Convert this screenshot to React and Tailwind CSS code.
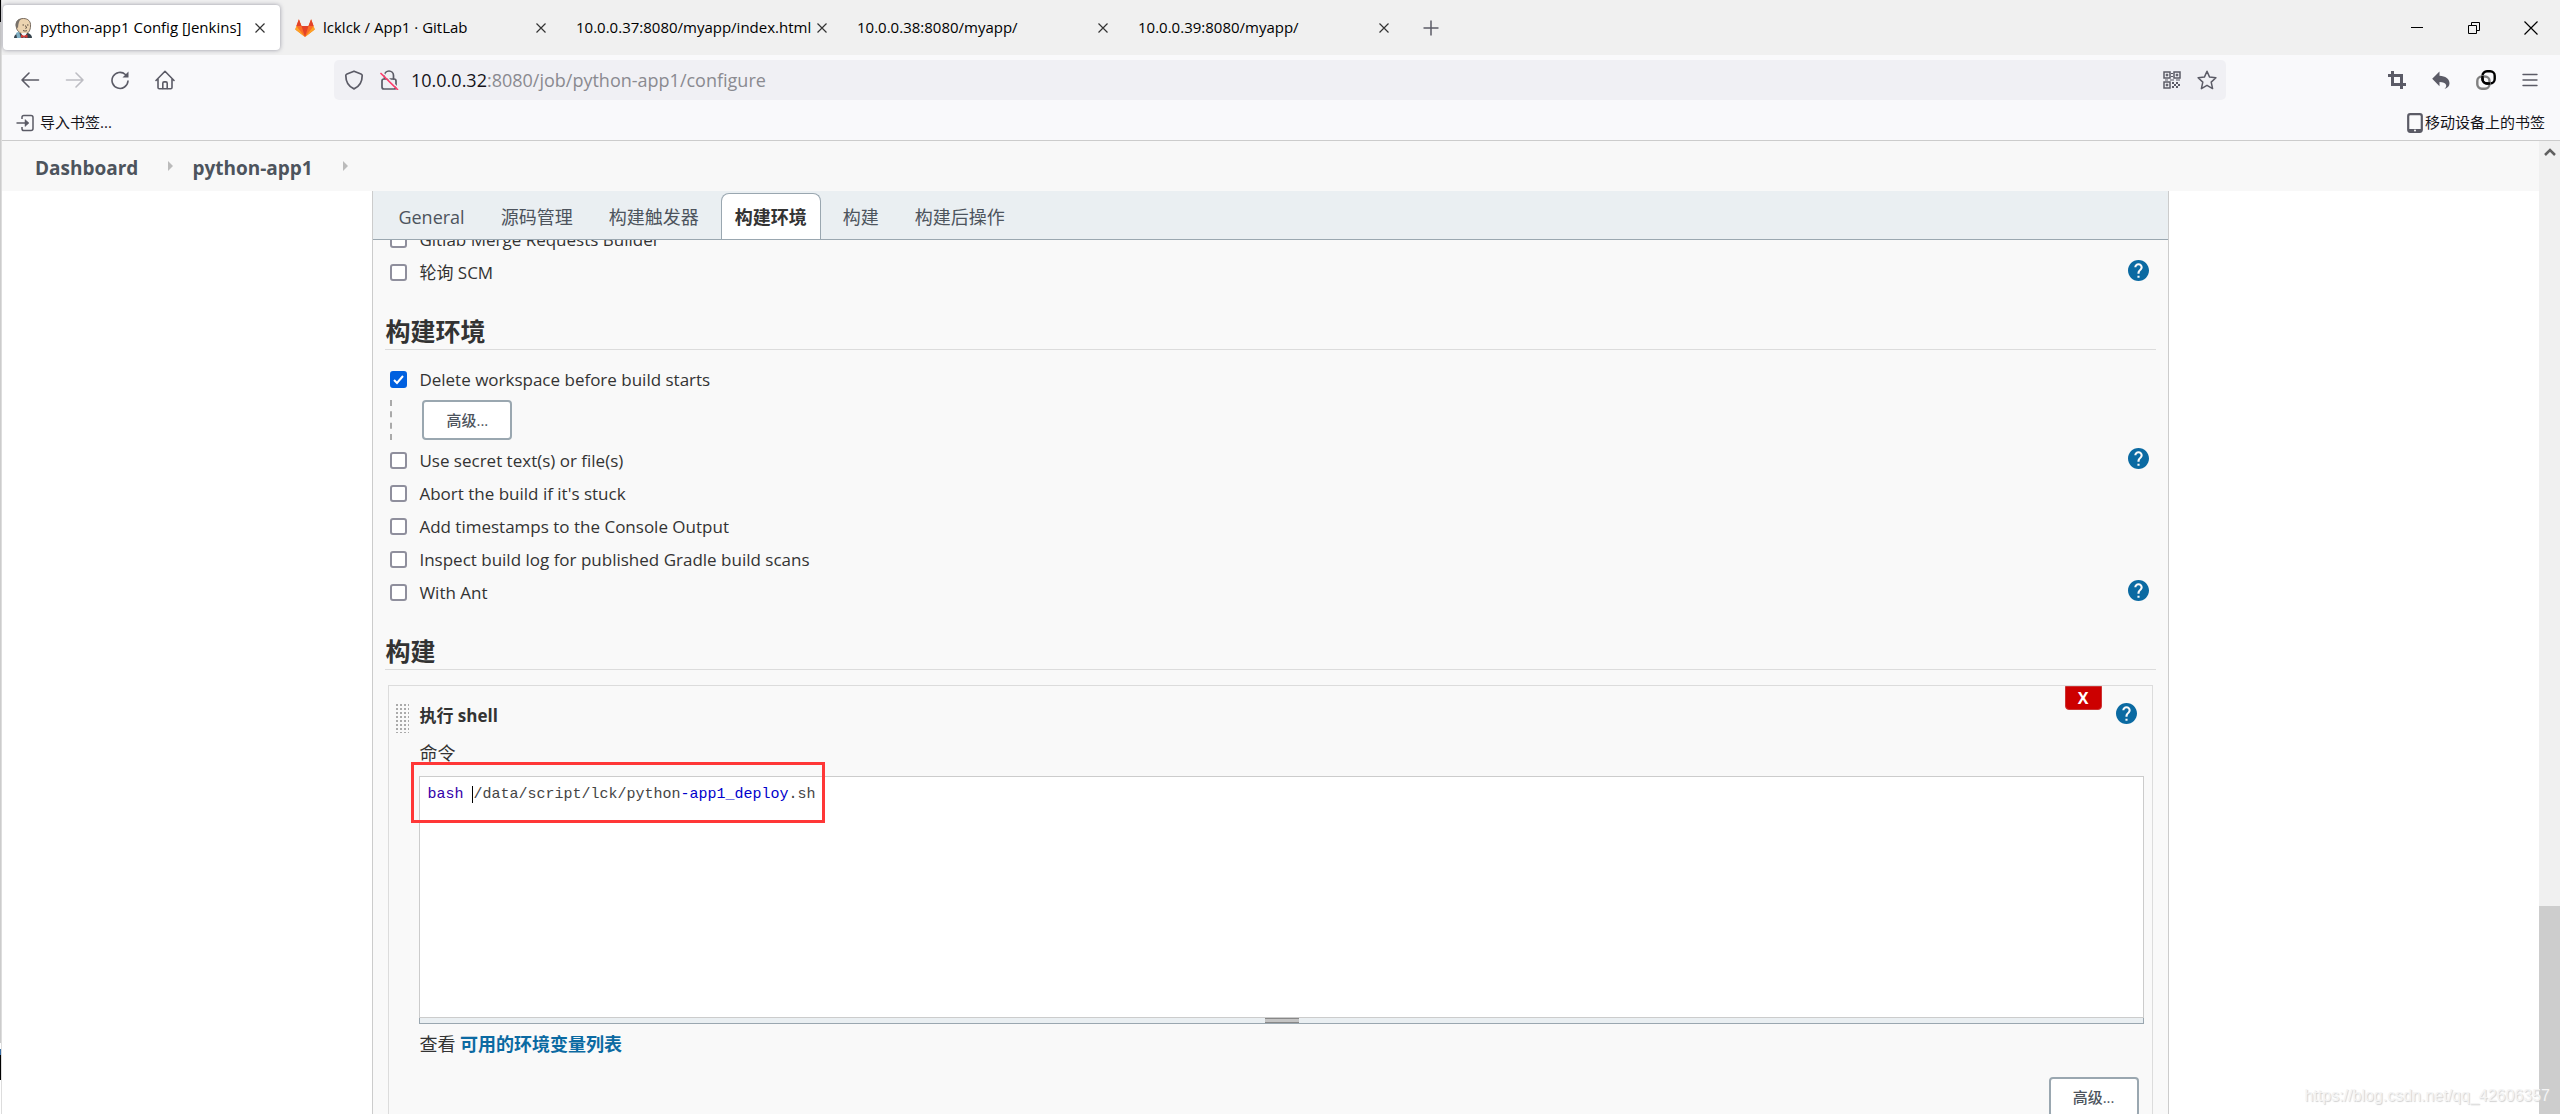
import { useState } from "react";

const browserTabs = [
    { title: "python-app1 Config [Jenkins]", icon: "jenkins", active: true },
    { title: "lcklck / App1 · GitLab", icon: "gitlab" },
    { title: "10.0.0.37:8080/myapp/index.html" },
    { title: "10.0.0.38:8080/myapp/" },
    { title: "10.0.0.39:8080/myapp/" },
];

const configTabs = ["General", "源码管理", "构建触发器", "构建环境", "构建", "构建后操作"];

const environmentOptions = [
    { id: "secret", label: "Use secret text(s) or file(s)", help: true },
    { id: "abort", label: "Abort the build if it's stuck" },
    { id: "timestamps", label: "Add timestamps to the Console Output" },
    { id: "gradle", label: "Inspect build log for published Gradle build scans" },
    { id: "ant", label: "With Ant", help: true },
];

/* ---------- Icons ---------- */

const JenkinsIcon = () => (
    <svg className="h-5 w-[18px] shrink-0" viewBox="0 0 18 20">
        <path d="M0 20c0-3 2-4 5-5h9c2 1 4 2 4 5z" fill="#35434d" />
        <path d="M2 7C2 3 5 0.5 9.500 0.5S17 3.500 16.500 8c0 4-2 8-6 8S3 13 2.500 10z" fill="#ecd3b0" stroke="#5b4c40" strokeWidth="0.8" />
        <path d="M2 9C1 4 4 0.500 8 0.800 5 2 4.500 5 4 10z" fill="#77716b" />
        <path d="M8.500 7h1.500M13 7h1.500M11.500 7.500l1 2.500-1 .5M9 12.500c1.500.8 3 .6 4 0" fill="none" stroke="#5b4c40" strokeWidth="1" />
        <path d="M7 15l3 5 3-5z" fill="#f4f4f4" />
        <path d="M7 16.500l3 1.200 3.500-1.200v3.500L10 19l-3 1z" fill="#d33833" />
        <path d="M2 15l3-1.500 2 6.500H3z" fill="#81b0c4" />
    </svg>
);

const GitlabIcon = () => (
    <svg className="h-5 w-5 shrink-0" viewBox="0 0 20 20">
        <path d="M10 19L0.300 11.500 3.900 1.200 6.500 8h7l2.600-6.800 3.600 10.300z" fill="#fc6d26" />
        <path d="M3.900 1.200L1.300 8h5.200zM16.100 1.200L18.700 8h-5.200zM10 19L6.500 8h7z" fill="#e24329" />
        <path d="M1.300 8l-1 3.500L10 19zM18.700 8l1 3.500L10 19z" fill="#fca326" />
    </svg>
);

const CloseIcon = () => (
    <svg className="h-2.5 w-2.5" viewBox="0 0 10 10" fill="none" stroke="#333333" strokeWidth="1.2">
        <path d="M0.500 0.500l9 9M9.500 0.500l-9 9" />
    </svg>
);

const ArrowIcon = ({ flip }) => (
    <svg className={flip ? "h-5 w-5 rotate-180" : "h-5 w-5"} viewBox="0 0 20 20" fill="none" stroke={flip ? "#bdbdc3" : "#5b5b66"} strokeWidth="1.6" strokeLinecap="round" strokeLinejoin="round">
        <path d="M18.500 10H2M9 3l-7 7 7 7" />
    </svg>
);

const ReloadIcon = () => (
    <svg className="h-5 w-5" viewBox="0 0 20 20" fill="none" stroke="#5b5b66" strokeWidth="1.6" strokeLinecap="round">
        <path d="M18 11a8 8 0 1 1-2.600-6.500" />
        <path d="M18.500 1.500v6h-6z" fill="#5b5b66" stroke="none" />
    </svg>
);

const HomeIcon = () => (
    <svg className="h-5 w-5" viewBox="0 0 20 20" fill="none" stroke="#5b5b66" strokeWidth="1.6" strokeLinejoin="round" strokeLinecap="round">
        <path d="M1 10.500L10 1.300l9 9.200M3 9v8.500c0 .8.500 1.300 1.300 1.300h11.400c.8 0 1.300-.5 1.300-1.300V9" />
        <path d="M7.800 18.500v-5.200c0-.9.500-1.400 1.300-1.400h1.800c.8 0 1.300.5 1.300 1.400v5.200" />
    </svg>
);

const ShieldIcon = () => (
    <svg className="h-5 w-5" viewBox="0 0 20 20" fill="none" stroke="#5b5b66" strokeWidth="1.7" strokeLinejoin="round">
        <path d="M10 1.200l7 2.800c.8.300 1.200.8 1.200 1.600 0 6-3 11.200-8.200 13.300C4.800 16.800 1.800 11.600 1.800 5.600 1.800 4.800 2.200 4.300 3 4z" />
    </svg>
);

const InsecureLockIcon = () => (
    <svg className="h-5 w-5" viewBox="0 0 20 20" fill="none" strokeLinecap="round">
        <rect x="3" y="9" width="14" height="10" rx="2" stroke="#5b5b66" strokeWidth="1.700" />
        <path d="M5.500 8.500V5.500a4.500 4.500 0 0 1 9 0v3.500" stroke="#5b5b66" strokeWidth="1.700" />
        <path d="M3.500 2.500l16 16" stroke="#f0f0f4" strokeWidth="1.500" />
        <path d="M2 3.500l16.500 16" stroke="#ff3b6b" strokeWidth="1.700" />
    </svg>
);

const QrIcon = () => (
    <svg className="h-[18px] w-[18px]" viewBox="0 0 18 18" fill="none" stroke="#5b5b66" strokeWidth="1.500">
        <path d="M1 1h6v6H1zM11 1h6v6h-6zM1 11h6v6H1z" />
        <path d="M3.200 3.200h1.600v1.600H3.200zM13.200 3.200h1.600v1.600h-1.600zM3.200 13.200h1.600v1.600H3.200zM8 2.500h2M8 5.500h2M2 9h3M7 9h4M13 9h4" fill="#5b5b66" strokeWidth="1" />
        <path d="M9 11h2v2H9zM13 11h2v2h-2zM11 13h2v2h-2zM15 13h2v2h-2zM9 15h2v2H9zM13 15h2v2h-2z" fill="#5b5b66" stroke="none" />
    </svg>
);

const StarIcon = () => (
    <svg className="h-5 w-5" viewBox="0 0 20 20" fill="none" stroke="#5b5b66" strokeWidth="1.500" strokeLinejoin="round">
        <path d="M10 1.200l2.600 5.900 6.300.7-4.700 4.300 1.400 6.500L10 15.300l-5.600 3.300 1.400-6.500L1.100 7.800l6.300-.7z" />
    </svg>
);

const CropIcon = () => (
    <svg className="h-[18px] w-[18px]" viewBox="0 0 18 18" fill="none" stroke="#5b5b66" strokeWidth="3">
        <path d="M4.500 0v13.500H18M0 4.500h13.500V18" />
    </svg>
);

const UndoIcon = () => (
    <svg className="h-[18px] w-[18px]" viewBox="0 0 18 18">
        <path d="M7.500 0.500v4.300C13.500 5 17.500 8 17.500 12.300c0 2.700-1.800 4.700-5 5.700 1.800-1.500 2-3 1.500-4.200-.8-2-3-2.700-6.500-2.800v4.300L0.200 7.800z" fill="#5b5b66" />
    </svg>
);

const LinkRingsIcon = () => (
    <svg className="h-5 w-5" viewBox="0 0 20 20" fill="none" strokeWidth="2.400">
        <rect x="6.500" y="1.300" width="12.200" height="12.200" rx="4.500" stroke="#000000" />
        <rect x="1.300" y="6.500" width="12.200" height="12.200" rx="4.500" stroke="#808080" />
        <path d="M6.500 6v3a4.500 4.500 0 0 0 4.500 4.500h3" stroke="#000000" />
    </svg>
);

const MenuIcon = () => (
    <svg className="h-4 w-4" viewBox="0 0 16 16" stroke="#5b5b66" strokeWidth="1.400" strokeLinecap="round">
        <path d="M1 2.500h14M1 8h14M1 13.500h14" />
    </svg>
);

const ImportIcon = () => (
    <svg className="h-[18px] w-[18px] shrink-0" viewBox="0 0 18 18" fill="none" stroke="#5b5b66" strokeWidth="1.500" strokeLinejoin="round">
        <path d="M6 5V3.300C6 2 6.800 1.500 7.800 1.500H15c1.300 0 2 .7 2 2v11c0 1.300-.7 2-2 2H7.800C6.800 16.500 6 16 6 14.700V13" />
        <path d="M0.500 9H12" />
        <path d="M9 5.500L13 9l-4 3.500z" fill="#5b5b66" strokeWidth="0.500" />
    </svg>
);

const PhoneIcon = () => (
    <svg className="h-5 w-4 shrink-0" viewBox="0 0 16 20">
        <rect x="1.200" y="1.200" width="13.600" height="17.600" rx="2" fill="none" stroke="#5b5b66" strokeWidth="2.200" />
        <path d="M1 16h14v3H1z" fill="#5b5b66" />
        <circle cx="8" cy="17.500" r="1" fill="#ffffff" />
    </svg>
);

const CrumbArrow = () => (
    <svg className="h-2.5 w-[5px] shrink-0" viewBox="0 0 5 10">
        <path d="M0 0l5 5-5 5z" fill="#bbbbbb" />
    </svg>
);

/* ---------- Small parts ---------- */

const HelpLink = ({ className }) => (
    <a href="#help" aria-label="Help" className={className}>
        <svg className="h-[21px] w-[21px]" viewBox="2 2 20 20">
            <path
                fill="#0b6aa2"
                d="M12 2C6.480 2 2 6.480 2 12s4.480 10 10 10 10-4.480 10-10S17.520 2 12 2zm1 17h-2v-2h2v2zm2.070-7.750l-.9.920C13.450 12.900 13 13.500 13 15h-2v-.5c0-1.100.450-2.100 1.170-2.830l1.240-1.260c.370-.360.590-.860.590-1.410 0-1.100-.900-2-2-2s-2 .900-2 2H8c0-2.210 1.790-4 4-4s4 1.790 4 4c0 .880-.360 1.680-.930 2.250z"
            />
        </svg>
    </a>
);

const CheckRow = ({ id, label, help, defaultChecked }) => (
    <div className="flex h-[33px] items-start justify-between pl-[5px] pr-[7px]">
        <div className="flex h-full items-center gap-3">
            <input
                type="checkbox"
                id={id}
                defaultChecked={defaultChecked}
                className="h-[17px] w-[17px] appearance-none rounded-[3px] border-2 border-[#8f8f9d] bg-white checked:border-[#0060df] checked:bg-[#0060df] checked:bg-[url('data:image/svg+xml,%3Csvg%20xmlns=%22http://www.w3.org/2000/svg%22%20viewBox=%220%200%2013%2013%22%3E%3Cpath%20d=%22M2%207l3%203%206-7%22%20fill=%22none%22%20stroke=%22white%22%20stroke-width=%222%22/%3E%3C/svg%3E')]"
            />
            <label htmlFor={id}>{label}</label>
        </div>
        {help && <HelpLink className="mt-1" />}
    </div>
);

const SectionTitle = ({ children }) => (
    <h2 className="border-b border-[#dcdcdc] pt-[26px] pb-0.5 text-[25px] leading-8 font-bold">{children}</h2>
);

const AdvancedButton = () => (
    <button type="button" className="h-10 w-[90px] rounded border-2 border-[#9aa7b0] bg-white text-[15px] font-medium text-[#4d545d]">
        高级...
    </button>
);

/* ---------- Browser chrome ---------- */

const BrowserTabs = () => (
    <div className="flex h-[55px] shrink-0 items-center justify-between bg-[#f0f0f0] text-black">
        <div className="flex items-center">
            {browserTabs.map((tab) => (
                <div
                    key={tab.title}
                    className={
                        tab.active
                            ? "ml-px mr-1 flex h-[45px] w-[277px] items-center gap-2 rounded bg-white pl-[11px] pr-[15px] shadow-[0_0_4px_rgba(90,90,110,0.6)]"
                            : "mr-1 flex h-[45px] w-[277px] items-center gap-2 pl-[11px] pr-[15px]"
                    }
                >
                    {tab.icon === "jenkins" && <JenkinsIcon />}
                    {tab.icon === "gitlab" && <GitlabIcon />}
                    <span className="flex-1 text-[15px] whitespace-nowrap">{tab.title}</span>
                    <button type="button" aria-label="Close tab" className="-ml-2 shrink-0">
                        <CloseIcon />
                    </button>
                </div>
            ))}
            <button type="button" aria-label="New tab" className="ml-[15px]">
                <svg className="h-4 w-4" viewBox="0 0 16 16" stroke="#5b5b66" strokeWidth="1.500">
                    <path d="M8 0.500v15M0.500 8h15" />
                </svg>
            </button>
        </div>
        <div className="flex items-center gap-[43px] pr-[22px]">
            <button type="button" aria-label="Minimize">
                <svg className="h-3.5 w-3.5" viewBox="0 0 14 14" stroke="#000000">
                    <path d="M1 6.500h12" />
                </svg>
            </button>
            <button type="button" aria-label="Restore">
                <svg className="h-3.5 w-3.5" viewBox="0 0 14 14" fill="none" stroke="#000000">
                    <path d="M1.500 4.500h8v8h-8zM4.500 4.500v-3h8v8h-3" />
                </svg>
            </button>
            <button type="button" aria-label="Close">
                <svg className="h-3.5 w-3.5" viewBox="0 0 14 14" stroke="#000000" strokeWidth="1.200">
                    <path d="M0.500 0.500l13 13M13.500 0.500l-13 13" />
                </svg>
            </button>
        </div>
    </div>
);

const Toolbar = () => (
    <div className="flex h-[50px] shrink-0 items-center bg-[#f9f9fb]">
        <div className="flex w-[332px] shrink-0 items-center gap-[25px] pl-[18px]">
            <button type="button" aria-label="Back"><ArrowIcon /></button>
            <button type="button" aria-label="Forward"><ArrowIcon flip /></button>
            <button type="button" aria-label="Reload"><ReloadIcon /></button>
            <button type="button" aria-label="Home"><HomeIcon /></button>
        </div>
        <div className="flex h-10 flex-1 items-center rounded-[5px] bg-[#f0f0f4] pl-2.5 pr-[9px]">
            <ShieldIcon />
            <span className="ml-[15px]"><InsecureLockIcon /></span>
            <p className="ml-3 flex-1 text-[18px] text-[#8a8a90]">
                <span className="text-[#15141a]">10.0.0.32</span>:8080/job/python-app1/configure
            </p>
            <div className="flex items-center gap-4">
                <button type="button" aria-label="QR code"><QrIcon /></button>
                <button type="button" aria-label="Bookmark"><StarIcon /></button>
            </div>
        </div>
        <div className="flex w-[334px] shrink-0 items-center justify-end gap-[26px] pr-[22px]">
            <button type="button" aria-label="Screenshot"><CropIcon /></button>
            <button type="button" aria-label="Undo"><UndoIcon /></button>
            <button type="button" aria-label="Container"><LinkRingsIcon /></button>
            <button type="button" aria-label="Menu"><MenuIcon /></button>
        </div>
    </div>
);

const BookmarksBar = () => (
    <div className="flex h-9 shrink-0 items-center justify-between border-b border-[#cccccc] bg-[#f9f9fb] pl-[14px] pr-[15px] text-[15px] text-[#15141a]">
        <button type="button" className="flex items-center gap-1.5">
            <ImportIcon />
            导入书签...
        </button>
        <button type="button" className="flex items-center gap-0.5">
            <PhoneIcon />
            移动设备上的书签
        </button>
    </div>
);

/* ---------- Jenkins page ---------- */

const Breadcrumbs = () => (
    <nav className="flex h-[50px] shrink-0 items-center bg-[#f8f8f8] pl-[33px] pt-1 text-[19px] font-bold text-[#4d545d]">
        <a href="#dashboard">Dashboard</a>
        <span className="ml-[30px] mr-[19px] pb-1"><CrumbArrow /></span>
        <a href="#python-app1">python-app1</a>
        <span className="ml-[30px] pb-1"><CrumbArrow /></span>
    </nav>
);

const ConfigTabs = ({ active, onSelect }) => (
    <div className="relative z-10 flex h-[49px] items-end gap-2 border-b border-[#9aa7b0] bg-[#eaeff2] pl-[11px]">
        {configTabs.map((tab) => (
            <button
                key={tab}
                type="button"
                onClick={() => onSelect(tab)}
                className={
                    tab === active
                        ? "h-[46px] rounded-t-lg border border-b-0 border-[#9aa7b0] bg-white px-[13px] pt-0.5 text-[18px] font-bold text-[#333333]"
                        : "h-[46px] px-3.5 pt-0.5 text-[18px] text-[#4d545d]"
                }
            >
                {tab}
            </button>
        ))}
    </div>
);

const DragHandle = () => (
    <div className="mt-[17px] h-[30px] w-3.5 shrink-0 cursor-move bg-[radial-gradient(circle,#aaaaaa_1px,transparent_1px)] bg-size-[4px_4px]" />
);

const ShellEditor = () => (
    <div className="relative">
        <div
            role="textbox"
            aria-labelledby="command-label"
            contentEditable
            suppressContentEditableWarning
            spellCheck={false}
            className="h-[242px] border border-[#cccccc] bg-white px-[7px] pt-2 font-['Liberation_Mono','Noto_Sans_CJK_SC',monospace] text-[15px] leading-5 whitespace-pre text-[#444444] outline-none"
        >
            <span className="text-[#3300aa]">bash</span>
            <span className="border-r border-black"> </span>
            /data/script/lck/python
            <span className="text-[#0000cc]">-app1_deploy</span>
            .sh
        </div>
        <div className="flex h-1.5 cursor-row-resize justify-center border border-t-0 border-[#9aa7b0] bg-[#eaeff2]">
            <div className="h-full w-[34px] border-y border-[#888888] bg-[#c4c4c4]" />
        </div>
        {/* Highlight around the deploy command */}
        <div className="pointer-events-none absolute -top-3.5 -left-2 h-[61px] w-[414px] border-3 border-[#ff3737]" />
    </div>
);

const ShellStep = () => (
    <section className="mx-[3px] mt-[15px] flex flex-1 border border-b-0 border-[#dcdcdc] pl-1.5 pr-2">
        <DragHandle />
        <div className="ml-2.5 flex-1">
            <div className="flex h-[55px] items-start">
                <h3 className="flex-1 pt-[18px] text-[17px] leading-6 font-bold">执行 shell</h3>
                <button
                    type="button"
                    className="h-6 w-[37px] rounded-b border border-[#cc3333] bg-[#cc0000] text-[16px] leading-5 font-bold text-white"
                >
                    X
                </button>
                <HelpLink className="ml-3.5 mr-[7px] mt-[17px]" />
            </div>
            <p id="command-label" className="mb-[11px] text-[18px] leading-6">命令</p>
            <ShellEditor />
            <p className="mt-2 text-[18px] leading-6">
                查看 <a href="#env-vars" className="font-bold text-[#0b6aa2]">可用的环境变量列表</a>
            </p>
            <div className="mt-[21px] mr-[5px] flex justify-end">
                <AdvancedButton />
            </div>
        </div>
    </section>
);

const ConfigForm = () => {
    const [active, setActive] = useState("构建环境");

    return (
        <main className="mx-auto flex min-h-0 w-[70.8%] flex-1 flex-col border-x border-[#cccccc] bg-[#f9f9f9] text-[17px] text-[#333333]">
            <ConfigTabs active={active} onSelect={setActive} />
            <form className="flex min-h-0 flex-1 flex-col overflow-hidden px-3">
                {/* Form is scrolled, so the first row sits half under the tabs */}
                <div className="-mt-[17px]">
                    <CheckRow id="gitlab-merge" label="Gitlab Merge Requests Builder" />
                    <CheckRow id="poll-scm" label="轮询 SCM" help />
                </div>

                <SectionTitle>构建环境</SectionTitle>
                <div className="mt-[13px]">
                    <CheckRow id="delete-workspace" label="Delete workspace before build starts" defaultChecked />
                    <div className="mt-1 mb-1 ml-[5px] border-l-2 border-dashed border-[#aaaaaa] pl-[30px]">
                        <AdvancedButton />
                    </div>
                    {environmentOptions.map((option) => (
                        <CheckRow key={option.id} {...option} />
                    ))}
                </div>

                <SectionTitle>构建</SectionTitle>
                <ShellStep />
            </form>
        </main>
    );
};

const Scrollbar = () => (
    <div className="flex w-[21px] shrink-0 flex-col items-center bg-[#f0f0f0]">
        <svg className="mt-1.5 h-2.5 w-3 shrink-0" viewBox="0 0 12 10" fill="none" stroke="#606060" strokeWidth="2.500">
            <path d="M1 8l5-5 5 5" />
        </svg>
        <div className="mt-auto h-[21.4%] w-full bg-[#cdcdcd]" />
    </div>
);

// Sliver of the window that lies behind the browser
const WindowEdge = () => (
    <div className="flex w-0.5 shrink-0 flex-col border-r border-[#dddddd]">
        <div className="h-[2%] bg-black" />
        <div className="flex-1 bg-[#cccccc]" />
        <div className="h-1.5 bg-white" />
        <div className="h-1.5 bg-[#3a6ea5]" />
        <div className="mb-[34px] h-[25px] bg-black" />
    </div>
);

const App = () => {
    return (
        <div className="relative flex h-screen w-full overflow-hidden bg-white font-['Open_Sans','Noto_Sans_CJK_SC',sans-serif]">
            <WindowEdge />
            <div className="flex min-w-0 flex-1 flex-col">
                <BrowserTabs />
                <Toolbar />
                <BookmarksBar />
                <div className="flex min-h-0 flex-1">
                    <div className="flex min-w-0 flex-1 flex-col">
                        <Breadcrumbs />
                        <ConfigForm />
                    </div>
                    <Scrollbar />
                </div>
            </div>
            <p className="pointer-events-none absolute right-2.5 bottom-1.5 font-['Liberation_Sans',sans-serif] text-[16px] leading-6 text-[#f4f4f4] [text-shadow:1px_1px_1px_#d0d0d0]">
                https://blog.csdn.net/qq_42606357
            </p>
        </div>
    );
};

export default App;
